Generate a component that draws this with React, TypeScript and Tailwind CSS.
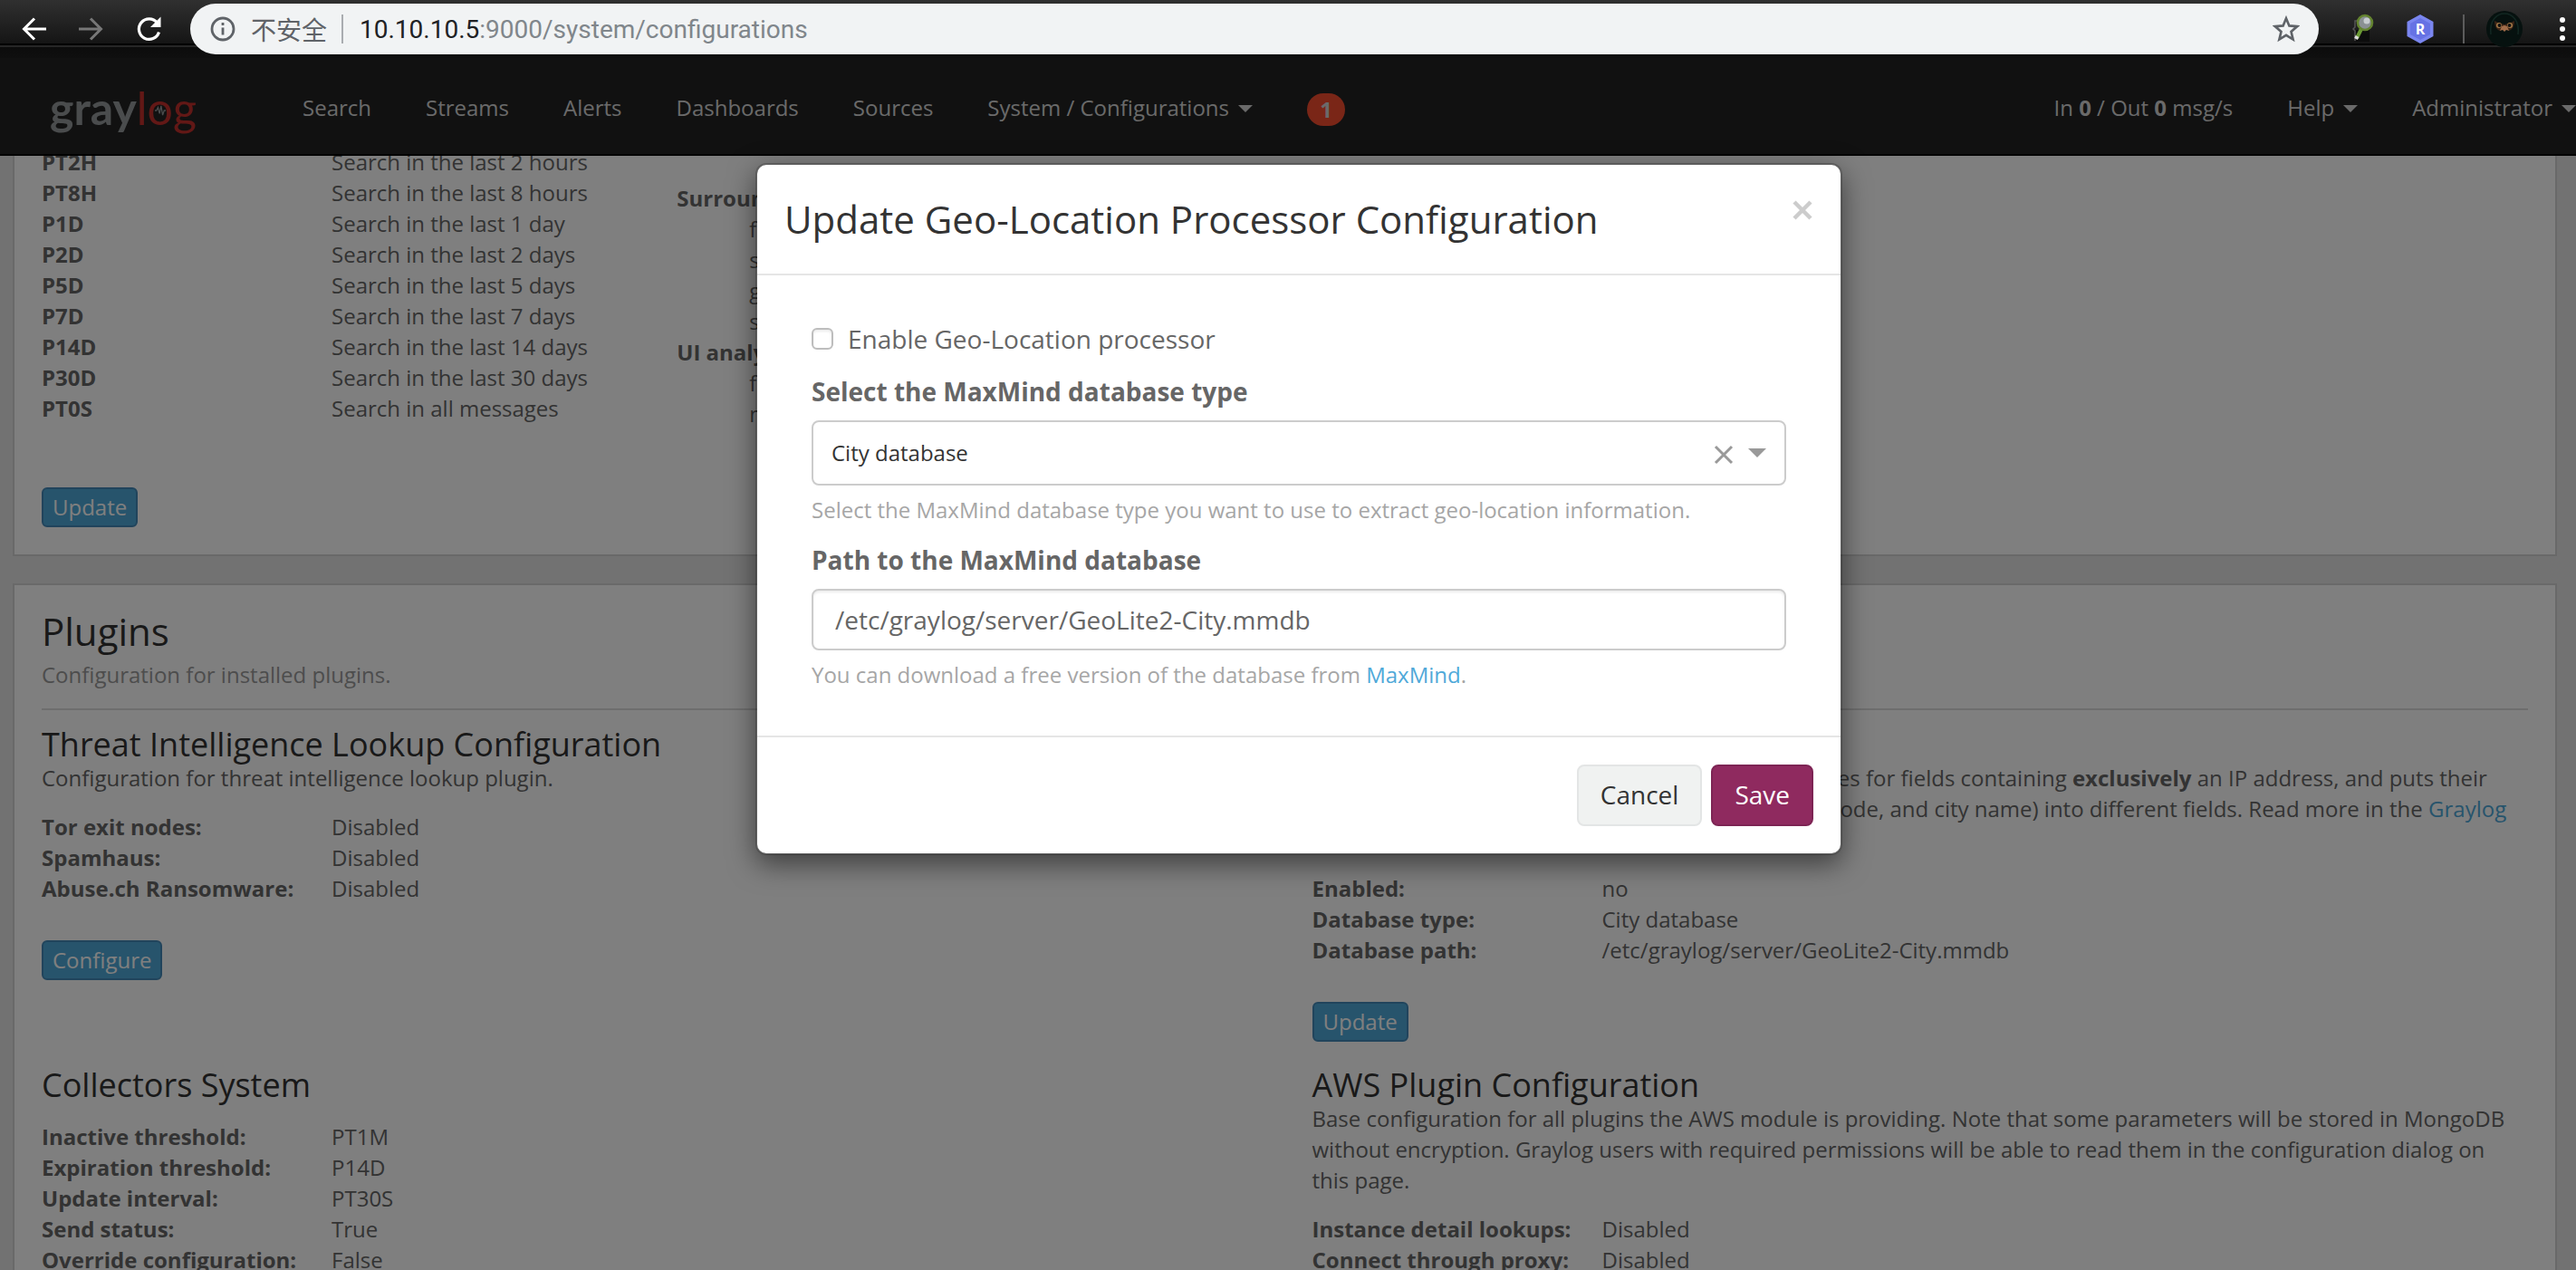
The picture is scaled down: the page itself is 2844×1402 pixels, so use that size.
import React from 'react';

type Entry = { term: string; value: string };

const timeRanges: Entry[] = [
  { term: 'PT2H', value: 'Search in the last 2 hours' },
  { term: 'PT8H', value: 'Search in the last 8 hours' },
  { term: 'P1D', value: 'Search in the last 1 day' },
  { term: 'P2D', value: 'Search in the last 2 days' },
  { term: 'P5D', value: 'Search in the last 5 days' },
  { term: 'P7D', value: 'Search in the last 7 days' },
  { term: 'P14D', value: 'Search in the last 14 days' },
  { term: 'P30D', value: 'Search in the last 30 days' },
  { term: 'PT0S', value: 'Search in all messages' },
];

const threatEntries: Entry[] = [
  { term: 'Tor exit nodes:', value: 'Disabled' },
  { term: 'Spamhaus:', value: 'Disabled' },
  { term: 'Abuse.ch Ransomware:', value: 'Disabled' },
];

const geoEntries: Entry[] = [
  { term: 'Enabled:', value: 'no' },
  { term: 'Database type:', value: 'City database' },
  { term: 'Database path:', value: '/etc/graylog/server/GeoLite2-City.mmdb' },
];

const collectorEntries: Entry[] = [
  { term: 'Inactive threshold:', value: 'PT1M' },
  { term: 'Expiration threshold:', value: 'P14D' },
  { term: 'Update interval:', value: 'PT30S' },
  { term: 'Send status:', value: 'True' },
  { term: 'Override configuration:', value: 'False' },
];

const awsEntries: Entry[] = [
  { term: 'Instance detail lookups:', value: 'Disabled' },
  { term: 'Connect through proxy:', value: 'Disabled' },
];

function Definitions({ entries }: { entries: Entry[] }) {
  return (
    <dl className="grid grid-cols-[320px_1fr]">
      {entries.map((e) => (
        <React.Fragment key={e.term}>
          <dt className="font-bold whitespace-nowrap">{e.term}</dt>
          <dd className="whitespace-nowrap">{e.value}</dd>
        </React.Fragment>
      ))}
    </dl>
  );
}

function InfoButton({ children }: { children: React.ReactNode }) {
  return (
    <button
      type="button"
      className="block h-11 w-fit rounded-md border-2 border-[#4289b8] bg-[#4fa9d9] px-2.5 text-[24px] leading-10 text-white"
    >
      {children}
    </button>
  );
}

function Caret() {
  return <span className="mt-0.5 ml-2.5 border-x-8 border-t-8 border-x-transparent border-t-current" />;
}

function BrowserBar() {
  return (
    <header className="flex h-16 shrink-0 items-start bg-[linear-gradient(#303030_0px,#151515_48px,#000_48px,#000_50px,#262626_50px,#262626_52px,#0c0c0c_52px,#0f0f0f_64px)] pt-1">
      <div className="flex h-14 w-[210px] shrink-0 items-center gap-[34px] pl-[22px]">
        <button type="button" aria-label="Back" className="text-white">
          <svg width="30" height="30" viewBox="0 0 30 30" fill="none" stroke="currentColor" strokeWidth="3">
            <path d="M29 15H5M16 3.500L4.500 15L16 26.500" />
          </svg>
        </button>
        <button type="button" aria-label="Forward" className="text-[#777]">
          <svg width="30" height="30" viewBox="0 0 30 30" fill="none" stroke="currentColor" strokeWidth="3">
            <path d="M1 15H25M14 3.500L25.500 15L14 26.500" />
          </svg>
        </button>
        <button type="button" aria-label="Reload" className="text-white">
          <svg width="30" height="30" viewBox="0 0 30 30" fill="none">
            <path d="M23.500 8A11.300 11.300 0 1 0 25.500 18.500" stroke="currentColor" strokeWidth="3.200" />
            <path d="M27.500 1.500V13H16z" fill="currentColor" />
          </svg>
        </button>
      </div>
      <div className="flex h-14 min-w-0 flex-1 items-center rounded-full bg-[#f1f3f4] px-[21px] text-[28px] leading-10">
        <svg width="30" height="30" viewBox="0 0 30 30" fill="none" stroke="#5f6368" strokeWidth="2.800" className="shrink-0">
          <circle cx="15" cy="15" r="12" />
          <path d="M15 13.500V21.500M15 8V11" />
        </svg>
        <span className="ml-4 font-['Noto_Sans_CJK_SC',sans-serif] whitespace-nowrap text-[#5f6368]">不安全</span>
        <span className="ml-4 h-8 w-0.5 bg-[#a9acb0]" />
        <div className="ml-[18px] flex-1 pt-0.5 font-[Roboto,sans-serif] whitespace-nowrap text-[#80868b]">
          <span className="text-[#202124]">10.10.10.5</span>:9000/system/configurations
        </div>
        <button type="button" aria-label="Bookmark this page">
          <svg width="30" height="30" viewBox="0 0 30 30" fill="none" stroke="#5f6368" strokeWidth="2.600">
            <path d="M15 3.200L18.400 11.400L27.200 12.100L20.500 17.900L22.600 26.600L15 21.900L7.400 26.600L9.500 17.900L2.800 12.100L11.600 11.400z" />
          </svg>
        </button>
      </div>
      <div className="flex h-14 w-[284px] shrink-0 items-center pl-[34px]">
        <svg width="30" height="34" viewBox="0 0 30 34" fill="none" className="shrink-0">
          <path d="M8 8H6V15L4 17L6 19V30" stroke="#555" strokeWidth="1.500" />
          <path d="M7 18H22V31H7z" fill="#0d0d0d" />
          <path d="M13 17L8 27" stroke="#6b9a34" strokeWidth="4" />
          <path d="M8.500 25L7 28" stroke="#ddd" strokeWidth="4" />
          <circle cx="17" cy="10" r="8" fill="#8a9094" stroke="#63832f" strokeWidth="2.600" />
          <circle cx="19" cy="8" r="3.500" fill="#c7ccd0" />
        </svg>
        <svg width="30" height="32" viewBox="0 0 30 32" className="ml-[33px] shrink-0">
          <path d="M15 0L29.500 8V24L15 32L0.500 24V8z" fill="#7a86f0" />
          <path d="M15 4L26 10V22L15 28L4 22V10z" fill="#6672e4" />
          <text x="15" y="22" textAnchor="middle" fontSize="16" fontWeight="700" fill="#fff" fontFamily="Open Sans, sans-serif">
            R
          </text>
        </svg>
        <span className="ml-[32px] h-8 w-0.5 shrink-0 bg-[#5c5c5c]" />
        <svg width="40" height="40" viewBox="0 0 40 40" className="ml-[24px] shrink-0">
          <circle cx="20" cy="20" r="20" fill="#06110f" />
          <path d="M5 26C3 10 12 3 20 3S37 10 35 26" fill="none" stroke="#122722" strokeWidth="1.500" />
          <path d="M9 11L14 13.500L20 15L26 13.500L31 11C31 18 28 21 25 22C23 20 21 19 20 19S17 20 15 22C12 21 9 18 9 11z" fill="#3c2517" />
          <path d="M17 17L20 16L23 17L25 22L22 21L20 23L18 21L15 22z" fill="#a06c49" />
          <circle cx="14" cy="16" r="3" fill="#a67a48" />
          <circle cx="26" cy="16" r="3" fill="#a67a48" />
          <circle cx="14.500" cy="16" r="2" fill="#111" />
          <circle cx="25.500" cy="16" r="2" fill="#111" />
        </svg>
        <button type="button" aria-label="Browser menu" className="ml-[41px] flex flex-col gap-1">
          <span className="size-1.5 rounded-full bg-white" />
          <span className="size-1.5 rounded-full bg-white" />
          <span className="size-1.5 rounded-full bg-white" />
        </button>
      </div>
    </header>
  );
}

function Navbar() {
  return (
    <nav className="flex h-[108px] items-center border-b-2 border-black bg-[#222] pt-1 pl-[55px] whitespace-nowrap text-[#d4d4d4]">
      <a href="#home" className="w-[279px] font-[Lato,sans-serif] text-[50px] leading-[60px]">
        <span className="font-bold text-[#94989a]">gray</span>
        <span className="text-[#c4302c]">
          l
          <span className="relative inline-block">
            o
            <svg
              viewBox="0 0 16 14"
              fill="none"
              stroke="#94989a"
              strokeWidth="1.500"
              className="absolute top-[27px] left-1/2 h-3 w-3.5 -translate-x-1/2"
            >
              <path d="M1 7H3L5 3L7 11L9 1L11 13L13 7H15" />
            </svg>
          </span>
          g
        </span>
      </a>
      <div className="flex flex-1 items-center gap-[60px]">
        <a href="#search">Search</a>
        <a href="#streams">Streams</a>
        <a href="#alerts">Alerts</a>
        <a href="#dashboards">Dashboards</a>
        <a href="#sources">Sources</a>
        <button type="button" className="flex items-center">
          System / Configurations
          <Caret />
        </button>
        <a href="#notifications" className="mt-1 flex h-9 w-[42px] items-center justify-center rounded-full bg-[#f44c2e] font-bold">
          1
        </a>
      </div>
      <div className="flex items-center gap-[60px]">
        <span>
          In <b>0</b> / Out <b>0</b> msg/s
        </span>
        <button type="button" className="flex items-center">
          Help
          <Caret />
        </button>
        <button type="button" className="flex items-center">
          Administrator
          <Caret />
        </button>
      </div>
    </nav>
  );
}

function PageContent() {
  return (
    <div className="h-full overflow-hidden bg-[#e4e4e4]">
      <div className="-mt-2.5 mr-[21px] ml-[14px]">
        <section className="grid grid-cols-4 gap-x-[60px] border-2 border-t-0 border-[#d2d2d2] bg-white px-[30px] pb-[30px]">
          <div>
            <Definitions entries={timeRanges} />
            <div className="mt-[70px]">
              <InfoButton>Update</InfoButton>
            </div>
          </div>
          <dl className="pt-10">
            <dt className="font-bold">Surrounding search filter fields:</dt>
            <dd className="ml-20">file</dd>
            <dd className="ml-20">source</dd>
            <dd className="ml-20">gl2_source_input</dd>
            <dd className="ml-20">source_file</dd>
            <dt className="font-bold">UI analysis disabled for fields:</dt>
            <dd className="ml-20">full_message</dd>
            <dd className="ml-20">message</dd>
          </dl>
        </section>

        <section className="mt-[30px] border-2 border-[#d2d2d2] bg-white px-[30px] pt-7 pb-[30px]">
          <h2 className="text-[42px] leading-[46px] text-[#333]">Plugins</h2>
          <p className="mt-2 text-[#9a9a9a]">Configuration for installed plugins.</p>
          <hr className="mt-5 border-t-2 border-[#dcdcdc]" />
          <div className="mt-[18px] grid grid-cols-2 gap-x-[60px] gap-y-7">
            <article>
              <h3 className="text-[36px] leading-10 text-[#333]">Threat Intelligence Lookup Configuration</h3>
              <p className="mb-5">Configuration for threat intelligence lookup plugin.</p>
              <Definitions entries={threatEntries} />
              <div className="mt-10">
                <InfoButton>Configure</InfoButton>
              </div>
            </article>
            <article>
              <h3 className="text-[36px] leading-10 text-[#333]">Geo-Location Processor</h3>
              <p className="mb-5">
                The Geo-Location Processor plugin scans all messages for fields containing <b>exclusively</b> an IP address, and puts their
                geo-location information (coordinates, ISO country code, and city name) into different fields. Read more in the{' '}
                <a href="#docs" className="text-[#4fa9d9]">
                  Graylog documentation
                </a>
                .
              </p>
              <Definitions entries={geoEntries} />
              <div className="mt-10">
                <InfoButton>Update</InfoButton>
              </div>
            </article>
            <article>
              <h3 className="mb-5 text-[36px] leading-10 text-[#333]">Collectors System</h3>
              <Definitions entries={collectorEntries} />
            </article>
            <article>
              <h3 className="text-[36px] leading-10 text-[#333]">AWS Plugin Configuration</h3>
              <p className="mb-5 pr-4">
                Base configuration for all plugins the AWS module is providing. Note that some parameters will be stored in MongoDB
                without encryption. Graylog users with required permissions will be able to read them in the configuration dialog on
                this page.
              </p>
              <Definitions entries={awsEntries} />
            </article>
          </div>
        </section>
      </div>
    </div>
  );
}

function GeoDialog() {
  return (
    <div className="absolute inset-0 flex items-start justify-center bg-black/50 pt-[116px] pl-6">
      <form
        role="dialog"
        aria-labelledby="dialog-title"
        className="w-[1200px] rounded-xl border-2 border-black/20 bg-white bg-clip-padding shadow-[0_10px_30px_rgba(0,0,0,0.5)]"
      >
        <div className="flex items-start justify-between border-b-2 border-[#e5e5e5] p-[30px]">
          <h4 id="dialog-title" className="text-[42px] leading-[60px] text-[#333]">
            Update Geo-Location Processor Configuration
          </h4>
          <button type="button" aria-label="Close" className="flex size-10 items-center justify-end text-[#ccc]">
            <svg width="24" height="24" viewBox="0 0 24 24" fill="none" stroke="currentColor" strokeWidth="4.500">
              <path d="M3 3L21 21M21 3L3 21" />
            </svg>
          </button>
        </div>
        <div className="px-[60px] py-[50px]">
          <label className="flex h-10 items-center gap-4 text-[28px] text-[#666]">
            <input
              type="checkbox"
              className="size-6 appearance-none rounded-md border-2 border-[#bdbdbd] bg-white shadow-[inset_0_2px_3px_rgba(0,0,0,0.08)]"
            />
            Enable Geo-Location processor
          </label>
          <label htmlFor="db-type" className="mt-[18px] block text-[28px] leading-10 font-bold text-[#666]">
            Select the MaxMind database type
          </label>
          <div className="relative mt-3">
            <select
              id="db-type"
              className="block h-[72px] w-full appearance-none rounded-lg border-2 border-[#ccc] bg-white px-5 text-[24px] text-[#333]"
            >
              <option>City database</option>
              <option>Country database</option>
            </select>
            <div className="pointer-events-none absolute inset-y-0 right-[22px] flex items-center gap-4 text-[#999]">
              <button type="button" aria-label="Clear value" className="pt-1">
                <svg width="22" height="22" viewBox="0 0 22 22" fill="none" stroke="currentColor" strokeWidth="3">
                  <path d="M2 2L20 20M20 2L2 20" />
                </svg>
              </button>
              <span className="border-x-10 border-t-10 border-x-transparent border-t-current" />
            </div>
          </div>
          <p className="mt-2.5 text-[#a6a6a6]">
            Select the MaxMind database type you want to use to extract geo-location information.
          </p>
          <label htmlFor="db-path" className="mt-[18px] block text-[28px] leading-10 font-bold text-[#666]">
            Path to the MaxMind database
          </label>
          <input
            id="db-path"
            type="text"
            defaultValue="/etc/graylog/server/GeoLite2-City.mmdb"
            className="mt-3 block h-[68px] w-full rounded-lg border-2 border-[#ccc] bg-white px-6 text-[28px] text-[#666] shadow-[inset_0_2px_3px_rgba(0,0,0,0.08)]"
          />
          <p className="mt-2.5 text-[#a6a6a6]">
            You can download a free version of the database from{' '}
            <a href="#maxmind" className="text-[#4fa9d9]">
              MaxMind
            </a>
            .
          </p>
        </div>
        <div className="flex justify-end gap-2.5 border-t-2 border-[#e5e5e5] p-[30px] text-[28px]">
          <button type="button" className="h-[68px] rounded-lg border-2 border-[#e3e5e5] bg-[#f0f2f1] px-6 pb-0.5 text-[#333]">
            Cancel
          </button>
          <button type="submit" className="h-[68px] rounded-lg border-2 border-[#7d2454] bg-[#8f2a5f] px-6 pb-0.5 text-white">
            Save
          </button>
        </div>
      </form>
    </div>
  );
}

export default function App() {
  return (
    <div className="flex h-screen flex-col overflow-hidden bg-[#0f0f0f] font-['Open_Sans',sans-serif] text-[24px] leading-[34px] text-[#666]">
      <BrowserBar />
      <main className="relative flex min-h-0 flex-1 flex-col">
        <Navbar />
        <div className="min-h-0 flex-1">
          <PageContent />
        </div>
        <GeoDialog />
      </main>
    </div>
  );
}
